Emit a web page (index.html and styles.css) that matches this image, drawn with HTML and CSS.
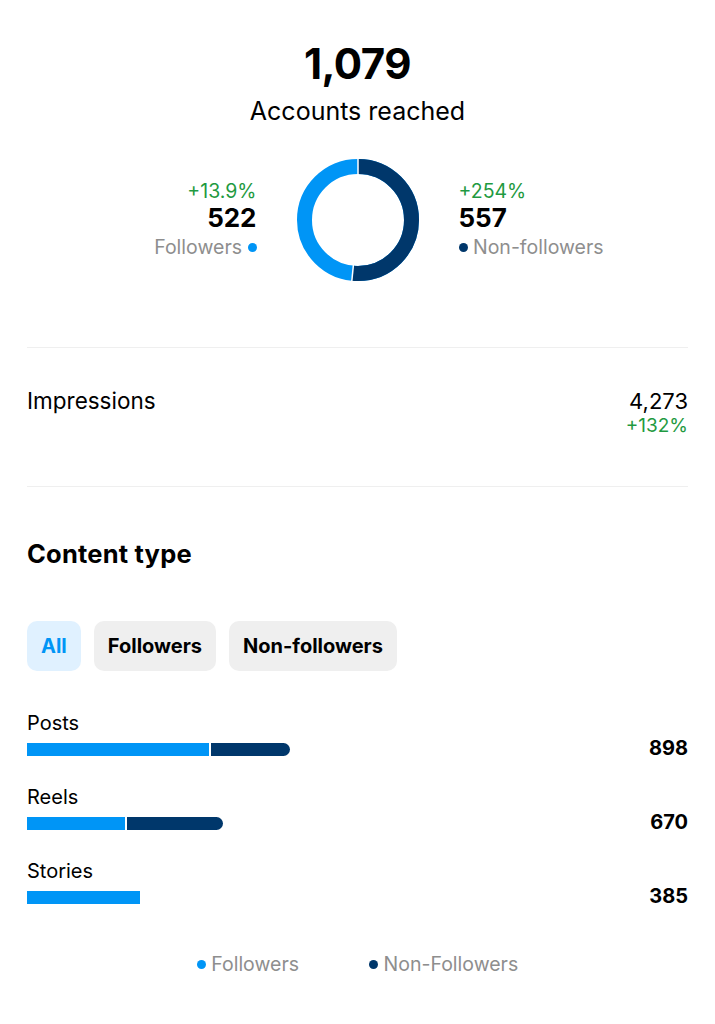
FILE: index.html
```html
<!DOCTYPE html>
<html lang="en">
<head>
  <meta charset="UTF-8" />
  <meta name="viewport" content="width=device-width, initial-scale=1.0" />
  <title>Insights - Accounts reached</title>
  <link rel="stylesheet" href="styles.css">
</head>
<body>
  <div class="page">
    <div class="reach">
      <div class="reach-total">1,079</div>
      <div class="reach-label">Accounts reached</div>
    </div>

    <div class="split">
      <div class="stat stat-left">
        <div class="stat-change">+13.9%</div>
        <div class="stat-value">522</div>
        <div class="stat-label">Followers <span class="dot dot-light"></span></div>
      </div>

      <svg class="donut" width="122" height="122" viewBox="0 0 122 122">
        <circle cx="61" cy="61" r="53.5" fill="none" stroke="#0095f6" stroke-width="15" />
        <circle cx="61" cy="61" r="53.5" fill="none" stroke="#00376b" stroke-width="15"
                stroke-dasharray="173.5 400" transform="rotate(-90 61 61)" />
        <line x1="61" y1="0" x2="61" y2="16" stroke="#fff" stroke-width="1.5" />
        <line x1="54.8" y1="122" x2="56.4" y2="106" stroke="#fff" stroke-width="1.5" />
      </svg>

      <div class="stat stat-right">
        <div class="stat-change">+254%</div>
        <div class="stat-value">557</div>
        <div class="stat-label"><span class="dot dot-dark"></span> Non-followers</div>
      </div>
    </div>

    <div class="impressions">
      <div class="impressions-label">Impressions</div>
      <div class="impressions-numbers">
        <div class="impressions-value">4,273</div>
        <div class="impressions-change">+132%</div>
      </div>
    </div>

    <div class="content-type">
      <h2>Content type</h2>

      <div class="chips">
        <button type="button" class="chip chip-active">All</button>
        <button type="button" class="chip">Followers</button>
        <button type="button" class="chip">Non-followers</button>
      </div>

      <div class="bars" id="bars"></div>

      <div class="legend">
        <div class="legend-item"><span class="dot dot-light"></span> Followers</div>
        <div class="legend-item"><span class="dot dot-dark"></span> Non-Followers</div>
      </div>
    </div>
  </div>

  <script>
    const tipos = [
      { nome: 'Posts', seguidores: 623, outros: 275 },
      { nome: 'Reels', seguidores: 335, outros: 335 },
      { nome: 'Stories', seguidores: 385, outros: 0 }
    ];
    const escala = 263 / 898;
    const bars = document.getElementById('bars');

    tipos.forEach(tipo => {
      const total = tipo.seguidores + tipo.outros;
      const linha = document.createElement('div');
      linha.classList.add('bar-row');

      let trilha = `<span class="bar-light" style="width:${Math.round(tipo.seguidores * escala)}px"></span>`;
      if (tipo.outros > 0) {
        // o espaço branco entre as partes sai da parte escura
        trilha += `<span class="bar-dark" style="width:${Math.round(tipo.outros * escala) - 2}px"></span>`;
      }

      linha.innerHTML = `<div class="bar-info"><div class="bar-name">${tipo.nome}</div><div class="bar-track">${trilha}</div></div><div class="bar-total">${total}</div>`;
      bars.appendChild(linha);
    });
  </script>
</body>
</html>
```

FILE: styles.css
```css
body {
  font-family: Inter, "Noto Sans", sans-serif;
  background: #fff;
  color: #000;
  margin: 0;
  padding: 0;
}
.page {
  width: 661px;
  padding: 0 27px;
}
.reach {
  text-align: center;
  padding-top: 38px;
}
.reach-total {
  font-size: 42px;
  font-weight: 700;
  line-height: 52px;
  letter-spacing: -0.5px;
}
.reach-label {
  font-size: 25px;
  line-height: 30px;
  margin-top: 6px;
}
.split {
  display: grid;
  grid-template-columns: 1fr auto 1fr;
  column-gap: 40px;
  align-items: center;
  margin-top: 33px;
  padding-bottom: 66px;
  border-bottom: 1.5px solid #efefef;
}
.stat-left {
  text-align: right;
}
.stat-change {
  color: #1f9a41;
  font-size: 19.5px;
  line-height: 24px;
}
.stat-value {
  font-size: 26px;
  font-weight: 700;
  line-height: 30px;
}
.stat-label {
  color: #8e8e8e;
  font-size: 19.5px;
  line-height: 28px;
}
.dot {
  display: inline-block;
  width: 9px;
  height: 9px;
  border-radius: 50%;
  vertical-align: 2px;
}
.dot-light {
  background: #0095f6;
}
.dot-dark {
  background: #00376b;
}
.donut {
  display: block;
}
.impressions {
  display: flex;
  justify-content: space-between;
  padding: 40px 0 48px;
  border-bottom: 1.5px solid #efefef;
}
.impressions-label {
  font-size: 22.5px;
  line-height: 26px;
}
.impressions-numbers {
  text-align: right;
}
.impressions-value {
  font-size: 22px;
  line-height: 26px;
}
.impressions-change {
  color: #1f9a41;
  font-size: 19px;
  line-height: 24px;
}
.content-type h2 {
  font-size: 25.5px;
  font-weight: 700;
  line-height: 30px;
  letter-spacing: 0.2px;
  margin: 52px 0 0;
}
.chips {
  display: flex;
  gap: 13px;
  margin-top: 52px;
}
.chip {
  font-family: inherit;
  font-size: 20px;
  font-weight: 700;
  height: 50px;
  padding: 0 14px;
  border: none;
  border-radius: 10px;
  background: #efefef;
  color: #000;
}
.chip-active {
  background: #e0f1ff;
  color: #0095f6;
}
.bars {
  margin-top: 11px;
}
.bar-row {
  display: flex;
  justify-content: space-between;
  align-items: flex-end;
  height: 74px;
}
.bar-name {
  font-size: 20px;
  line-height: 24px;
}
.bar-track {
  display: flex;
  gap: 2px;
  margin-top: 8px;
}
.bar-light, .bar-dark {
  display: block;
  height: 13px;
}
.bar-light {
  background: #0095f6;
}
.bar-dark {
  background: #00376b;
  border-radius: 0 7px 7px 0;
}
.bar-total {
  font-size: 20px;
  font-weight: 700;
  line-height: 24px;
  margin-bottom: -4px;
}
.legend {
  display: flex;
  justify-content: center;
  gap: 70px;
  margin-top: 48px;
  color: #8e8e8e;
  font-size: 19.5px;
  line-height: 24px;
}
```
